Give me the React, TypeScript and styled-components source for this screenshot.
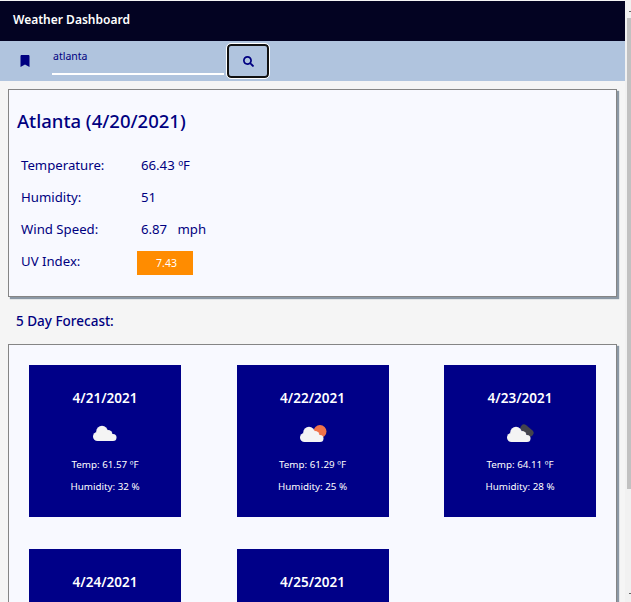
import React from "react";
import styled, { createGlobalStyle } from "styled-components";
import { FaBookmark, FaSearch } from "react-icons/fa";

const Global = createGlobalStyle`
  html, body { margin: 0; padding: 0; height: 100%; overflow: hidden; background: #f5f5f5; }
  #root { height: 100%; }
  * { box-sizing: border-box; }
`;

const Viewport = styled.div`
  display: flex;
  height: 602px;
  width: 631px;
  font-family: "Noto Sans", "Open Sans", sans-serif;
  color: #000080;
`;

const Page = styled.main`
  width: 625px;
  height: 602px;
  overflow: hidden;
  padding-top: 1px;
  flex: none;
`;

const Scrollbar = styled.div`
  width: 6px;
  height: 602px;
  background: #f1f1f1;
  padding: 11px 0 8px 2px;
  flex: none;
  display: flex;
  flex-direction: column;
`;

const Arrow = styled.div`
  width: 2px;
  height: 1px;
  background: #666;
  align-self: flex-end;
`;

const Thumb = styled.div`
  height: 471px;
  margin: 6px 0 auto;
  background: #c1c1c1;
`;

const TitleBar = styled.header`
  height: 40px;
  background: #030322;
  color: #fff;
  display: flex;
  align-items: center;
  padding: 0 0 3px 13px;
  font-size: 12px;
  font-weight: 600;
`;

const SearchBar = styled.div`
  height: 40px;
  background: #b0c4de;
  display: flex;
  align-items: center;
`;

const BookmarkSlot = styled.div`
  width: 52px;
  display: flex;
  justify-content: center;
  padding: 0 3px 0 0;
  font-size: 12px;
`;

const SearchInput = styled.input`
  width: 172px;
  height: 28px;
  border: 0;
  border-bottom: 2px solid #fff;
  background: transparent;
  color: #000080;
  font: 10.5px "Noto Sans", sans-serif;
  padding: 0 1px 9px;
  outline: none;
`;

const SearchButton = styled.button`
  width: 42px;
  height: 34px;
  margin-left: 3px;
  border: 2px solid #111;
  outline: 1px solid #fff;
  border-radius: 4px;
  background: transparent;
  color: #000080;
  font-size: 11px;
  display: flex;
  align-items: center;
  justify-content: center;
  padding: 0;
`;

const Panel = styled.section`
  margin: 8px 8px 0 8px;
  width: 609px;
  background: #f8f9ff;
  border: 1px solid #858585;
  box-shadow: 2px 2px 1px #8b98a5;
`;

const CurrentPanel = styled(Panel)`
  height: 208px;
  padding: 19px 8px 0;
`;

const City = styled.h1`
  margin: 0 0 16px;
  font-size: 18.5px;
  font-weight: 500;
  line-height: 24px;
`;

const StatRow = styled.div`
  display: flex;
  height: 32px;
  align-items: center;
  padding-left: 4px;
  font-size: 13.2px;
`;

const StatLabel = styled.span`
  width: 120px;
  flex: none;
`;

const Badge = styled.span`
  width: 56px;
  height: 24px;
  margin: 3px 0 0 -4px;
  padding-left: 3px;
  background: #ff8c00;
  color: #fff;
  font-size: 10.5px;
  display: flex;
  align-items: center;
  justify-content: center;
`;

const ForecastTitle = styled.h2`
  margin: 15px 0 13px 16px;
  font-size: 13.5px;
  font-weight: 500;
  line-height: 19px;
`;

const ForecastPanel = styled(Panel)`
  margin-top: 0;
  height: 280px;
  padding: 20px 20px 0;
  display: grid;
  grid-template-columns: repeat(3, 152px);
  justify-content: space-between;
  grid-auto-rows: 152px;
  row-gap: 32px;
  overflow: hidden;
`;

const DayCard = styled.article`
  background: #000088;
  color: #fff;
  display: flex;
  flex-direction: column;
  align-items: center;
  padding-top: 23px;
`;

const DayDate = styled.div`
  font-size: 13.5px;
  font-weight: 600;
  line-height: 20px;
`;

const WeatherIcon = styled.svg`
  margin: 8px 0 12px;
  display: block;
`;

const DayLine = styled.div`
  font-size: 9.8px;
  line-height: 14px;
  margin-bottom: 8px;
`;

type Kind = "cloud" | "sun" | "dark";

const Icon = ({ kind }: { kind: Kind }) => (
  <WeatherIcon width="50" height="30" viewBox="0 0 50 30">
    {kind === "sun" && <circle cx="32" cy="15.5" r="6.5" fill="#f0734a" />}
    {kind === "dark" && (
      <line x1="29" y1="12" x2="35" y2="17" stroke="#44444c" strokeWidth="7" strokeLinecap="round" />
    )}
    <g fill="#f4f4f4" transform={kind === "cloud" ? undefined : "translate(-1 1)"}>
      <circle cx="22" cy="15.5" r="5.8" />
      <circle cx="17.5" cy="20.5" r="4.5" />
      <circle cx="28" cy="18.5" r="4.5" />
      <circle cx="33" cy="21.5" r="3.5" />
      <rect x="17.5" y="18" width="15.5" height="7" />
    </g>
  </WeatherIcon>
);

const days: { date: string; temp?: string; hum?: string; kind?: Kind }[] = [
  { date: "4/21/2021", temp: "61.57", hum: "32", kind: "cloud" },
  { date: "4/22/2021", temp: "61.29", hum: "25", kind: "sun" },
  { date: "4/23/2021", temp: "64.11", hum: "28", kind: "dark" },
  { date: "4/24/2021" },
  { date: "4/25/2021" },
];

export default function App() {
  return (
    <Viewport>
      <Global />
      <Page>
        <TitleBar>Weather Dashboard</TitleBar>
        <SearchBar>
          <BookmarkSlot><FaBookmark /></BookmarkSlot>
          <SearchInput defaultValue="atlanta" />
          <SearchButton><FaSearch /></SearchButton>
        </SearchBar>
        <CurrentPanel>
          <City>Atlanta (4/20/2021)</City>
          <StatRow><StatLabel>Temperature:</StatLabel>66.43 ºF</StatRow>
          <StatRow><StatLabel>Humidity:</StatLabel>51</StatRow>
          <StatRow><StatLabel>Wind Speed:</StatLabel>6.87&nbsp;&nbsp; mph</StatRow>
          <StatRow><StatLabel>UV Index:</StatLabel><Badge>7.43</Badge></StatRow>
        </CurrentPanel>
        <ForecastTitle>5 Day Forecast:</ForecastTitle>
        <ForecastPanel>
          {days.map((d) => (
            <DayCard key={d.date}>
              <DayDate>{d.date}</DayDate>
              {d.kind && <Icon kind={d.kind} />}
              {d.temp && <DayLine>Temp: {d.temp} ºF</DayLine>}
              {d.hum && <DayLine>Humidity: {d.hum} %</DayLine>}
            </DayCard>
          ))}
        </ForecastPanel>
      </Page>
      <Scrollbar>
        <Arrow />
        <Thumb />
        <Arrow />
      </Scrollbar>
    </Viewport>
  );
}
